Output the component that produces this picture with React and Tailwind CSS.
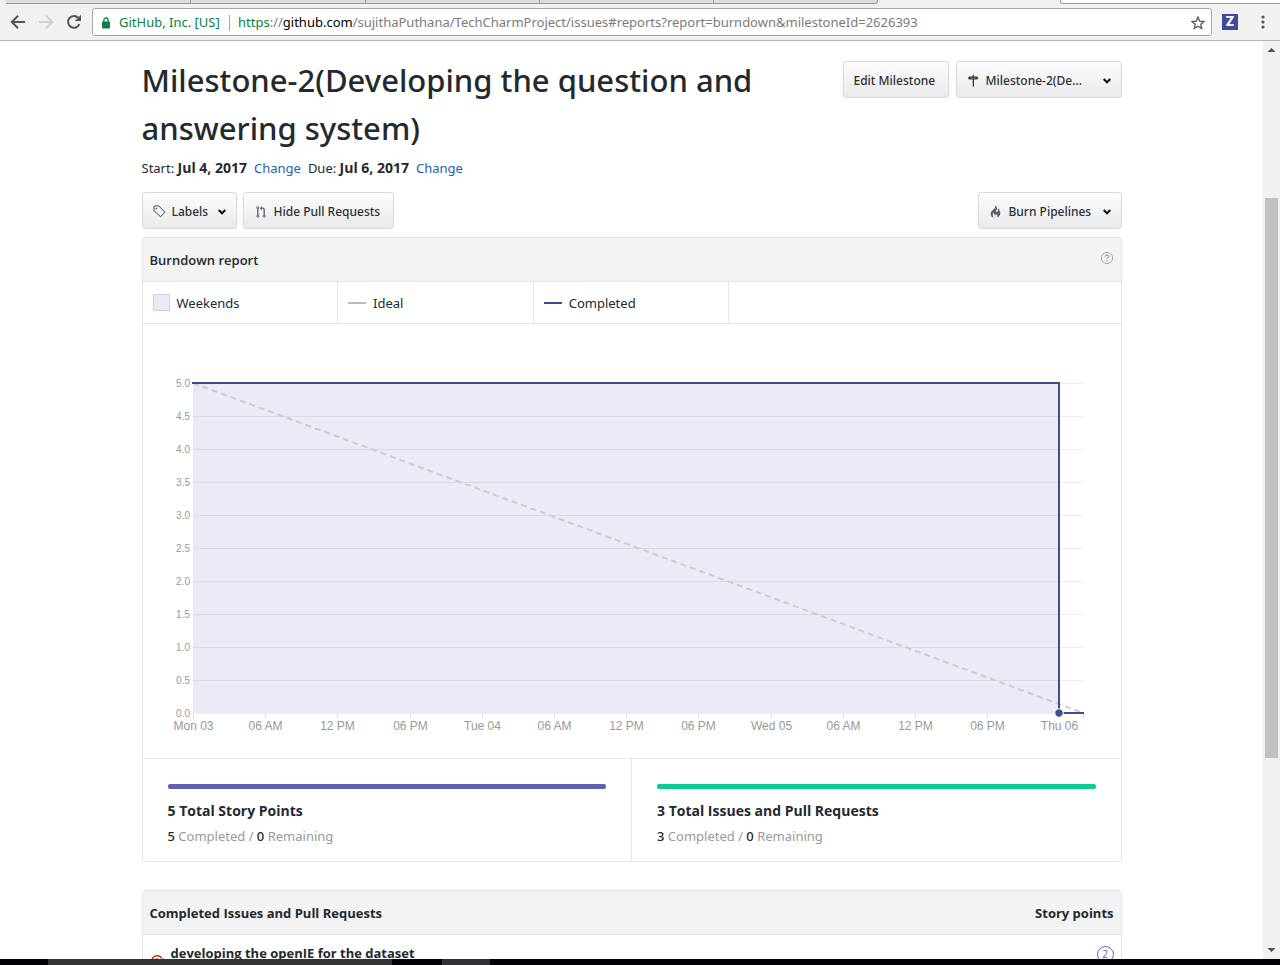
const ticksX = ["Mon 03", "06 AM", "12 PM", "06 PM", "Tue 04", "06 AM", "12 PM", "06 PM", "Wed 05", "06 AM", "12 PM", "06 PM", "Thu 06"];
const ticksY = ["5.0", "4.5", "4.0", "3.5", "3.0", "2.5", "2.0", "1.5", "1.0", "0.5", "0.0"];
const tickX = (i) => 50.5 + Math.round(i * 72.2);

function Chevron() {
  return (
    <svg width="8" height="6" viewBox="0 0 8 6" fill="none" stroke="#111" strokeWidth="2" aria-hidden="true">
      <path d="M0.7 1 L4 4.3 L7.3 1" />
    </svg>
  );
}

function TagIcon() {
  return (
    <svg width="13" height="13" viewBox="0 0 13 13" fill="none" stroke="#3f474f" aria-hidden="true">
      <path d="M1 1.9 Q1 1 1.9 1 H5.8 L12 7.2 L7.6 11.8 L1 5.6 Z" strokeLinejoin="round" />
      <circle cx="3.4" cy="3.5" r="0.8" fill="#3f474f" stroke="none" />
    </svg>
  );
}

function PullRequestIcon() {
  return (
    <svg width="10" height="12" viewBox="0 0 10 12" fill="none" stroke="#59636e" aria-hidden="true">
      <path d="M1.8 2.6 V9.4" strokeWidth="1.3" />
      <path d="M5 2.2 H7 Q8.2 2.2 8.2 3.6 V9.4" strokeWidth="1.3" />
      <path d="M6 0.2 V4.2 L3.8 2.2 Z" fill="#59636e" stroke="none" />
      <circle cx="1.8" cy="1.8" r="1.1" />
      <circle cx="1.8" cy="10.2" r="1.1" />
      <circle cx="8.2" cy="10.2" r="1.1" />
    </svg>
  );
}

function SignpostIcon() {
  return (
    <svg width="11" height="12" viewBox="0 0 11 12" fill="#2f363d" aria-hidden="true">
      <path d="M4.7 0 H6 V1.6 H9 L10.6 3 L9 4.4 H6 V11.5 H4.7 V4.4 H1 L0 3 L1 1.6 H4.7 Z" />
      <path d="M2 2.8 H8.4 V3.3 H2 Z" fill="#aaa" />
    </svg>
  );
}

function FlameIcon() {
  return (
    <svg width="11" height="13" viewBox="0 0 12 16" fill="#59636e" aria-hidden="true">
      <path d="M5.05 0.31c0.81 2.17 0.41 3.38-0.52 4.31C3.55 5.67 1.98 6.45 0.9 7.98c-1.45 2.05-1.7 6.53 3.53 7.7-2.2-1.16-2.67-4.52-0.3-6.61-0.61 2.03 0.53 3.33 1.94 2.86 1.39-0.47 2.3 0.53 2.27 1.67-0.02 0.78-0.31 1.44-1.13 1.81 3.42-0.59 4.78-3.42 4.78-5.56 0-2.84-2.53-3.22-1.25-5.61-1.52 0.13-2.03 1.13-1.89 2.75 0.09 1.08-1.02 1.8-1.86 1.33-0.67-0.41-0.66-1.19-0.06-1.78C8.18 5.31 8.68 2.45 5.05 0.32z" />
    </svg>
  );
}

function ToolButton({ children, menu, className = "" }) {
  return (
    <button
      type="button"
      aria-haspopup={menu ? "menu" : undefined}
      className={"flex h-[37px] items-center rounded-[3px] border border-[#d9d9d9] bg-linear-to-b from-[#fcfcfc] to-[#eaeaea] px-[10px] pt-[2px] text-[12px] font-medium whitespace-nowrap text-[#2b3137] " + className}
    >
      {children}
    </button>
  );
}

function BrowserBar() {
  return (
    <header className="shrink-0">
      <div className="flex h-1 bg-[#f1f1f1] pl-[6px]" aria-hidden="true">
        <div className="flex w-[872px] rounded-br-[3px] border-r border-b border-[#9b9b9b] bg-[#dcdcdc]">
          <div className="w-[185px] border-r border-[#a0a0a0]" />
          <div className="w-[175px] border-r border-[#a0a0a0]" />
          <div className="w-[174px] border-r border-[#a0a0a0]" />
          <div className="w-[174px] border-r border-[#a0a0a0]" />
        </div>
        <div className="w-[182px]" />
        <div className="flex-1 rounded-bl-[3px] border-b border-l border-[#9b9b9b] bg-white" />
      </div>
      <div className="flex h-[37px] items-center border-b border-[#b5b5b5] bg-[#f1f1f1] pr-[9px] pl-[10px]">
        <button type="button" aria-label="Back" className="w-[28px]">
          <svg width="16" height="16" viewBox="0 0 16 16" fill="none" stroke="#555" strokeWidth="2">
            <path d="M15 8 H2.4 M8 1.7 L1.8 8 L8 14.3" />
          </svg>
        </button>
        <button type="button" aria-label="Forward" className="w-[28px]">
          <svg width="16" height="16" viewBox="0 0 16 16" fill="none" stroke="#d0d0d0" strokeWidth="2">
            <path d="M1 8 H13.6 M8 1.7 L14.2 8 L8 14.3" />
          </svg>
        </button>
        <button type="button" aria-label="Reload" className="w-[26px]">
          <svg width="16" height="16" viewBox="0 0 16 16" fill="none" stroke="#555" strokeWidth="2">
            <path d="M13.4 10.2 A5.9 5.9 0 1 1 12.3 3.8" />
            <path d="M15 0.8 V7 H8.8 Z" fill="#555" stroke="none" />
          </svg>
        </button>
        <div className="flex h-[28px] flex-1 items-center rounded-[3px] border border-[#a6a6a6] bg-white pt-px pr-[6px] pl-[9px] text-[13px]">
          <svg width="8" height="12" viewBox="0 0 8 12" aria-hidden="true">
            <rect x="0" y="4.5" width="8" height="7" rx="0.8" fill="#0b8043" />
            <path d="M1.9 5 V3.1 a2.1 2.1 0 0 1 4.2 0 V5" fill="none" stroke="#0b8043" strokeWidth="1.3" />
          </svg>
          <span className="ml-[9px] w-[102px] whitespace-nowrap text-[#0b8043]">GitHub, Inc. [US]</span>
          <span className="mr-[8px] ml-[8px] h-[16px] w-px bg-[#a8a8a8]" />
          <div
            role="textbox"
            aria-label="Address"
            contentEditable
            suppressContentEditableWarning
            className="flex-1 whitespace-nowrap text-[#7b7b7b]"
          >
            <span className="text-[#0b8043]">https</span>://<span className="text-black">github.com</span>/sujithaPuthana/TechCharmProject/issues#reports?report=burndown&amp;milestoneId=2626393
          </div>
          <button type="button" aria-label="Bookmark">
            <svg width="14" height="14" viewBox="0 0 14 14" fill="none" stroke="#555" strokeWidth="1.3">
              <path d="M7 1.2 L8.7 5.1 L13 5.5 L9.8 8.3 L10.7 12.5 L7 10.3 L3.3 12.5 L4.2 8.3 L1 5.5 L5.3 5.1 Z" />
            </svg>
          </button>
        </div>
        <button type="button" className="ml-[10px] flex size-4 items-center justify-center bg-[#3e4b9c] font-[Inter,sans-serif] text-[13px] font-extrabold text-white">Z</button>
        <button type="button" aria-label="Menu" className="ml-[17px] flex w-[16px] justify-center">
          <svg width="4" height="14" viewBox="0 0 4 14" fill="#555">
            <circle cx="2" cy="2" r="1.6" />
            <circle cx="2" cy="7" r="1.6" />
            <circle cx="2" cy="12" r="1.6" />
          </svg>
        </button>
      </div>
    </header>
  );
}

function BurndownChart() {
  return (
    <svg viewBox="0 0 978 434" className="block w-full font-['Liberation_Sans',sans-serif]" role="img" aria-label="Burndown chart">
      <rect x="50" y="59" width="866" height="330" fill="#ebebf7" />
      {ticksY.map((t, i) => (
        <g key={t}>
          <path d={`M50 ${59.5 + i * 33} H940`} stroke="#000" strokeOpacity="0.07" />
          <text x="47" y={63 + i * 33} textAnchor="end" fontSize="10" fill="#999">{t}</text>
        </g>
      ))}
      {ticksX.map((t, i) => (
        <g key={i}>
          <path d={`M${tickX(i)} 390 V395`} stroke="#dedede" />
          <text x={tickX(i)} y="406" textAnchor="middle" fontSize="12" fill="#999">{t}</text>
        </g>
      ))}
      <path d="M940.5 390 V395" stroke="#dedede" />
      <path d="M50 59 L940 389" fill="none" stroke="#cccccf" strokeWidth="2" strokeDasharray="6 4" />
      <path d="M49 59 H916 V389" fill="none" stroke="#3f4d93" strokeWidth="2" />
      <path d="M916 389 H941" stroke="#3f4d93" strokeWidth="2" />
      <circle cx="916" cy="389" r="4.2" fill="#3f4d93" stroke="#fff" strokeWidth="1" />
    </svg>
  );
}

function Stat({ value, title, bar, className = "" }) {
  return (
    <div className={"flex-1 px-[25px] pt-[25px] pb-[14px] " + className}>
      <div className={"h-[5px] rounded-[2px] " + bar} />
      <h3 className="mt-[10px] font-['Open_Sans',sans-serif] text-[14px] leading-[24px] font-bold">{value} {title}</h3>
      <p className="mt-[2px] text-[13px] leading-[22px] text-[#999]">
        <span className="font-medium text-[#24292e]">{value}</span> Completed / <span className="font-medium text-[#24292e]">0</span> Remaining
      </p>
    </div>
  );
}

function Scrollbar() {
  return (
    <div className="flex w-[17px] shrink-0 flex-col items-center bg-[#f1f1f1]" aria-hidden="true">
      <svg width="9" height="17" viewBox="0 0 9 17" fill="#505050"><path d="M0.5 11 L4.5 7 L8.5 11 Z" /></svg>
      <div className="grow-[140]" />
      <div className="w-[13px] grow-[560] bg-[#c1c1c1]" />
      <div className="grow-[184]" />
      <svg width="9" height="17" viewBox="0 0 9 17" fill="#505050"><path d="M0.5 6 L4.5 10 L8.5 6 Z" /></svg>
    </div>
  );
}

export default function App() {
  return (
    <div className="flex h-screen flex-col overflow-hidden bg-white font-['Noto_Sans',sans-serif] text-[#24292e]">
      <BrowserBar />
      <div className="flex min-h-0 flex-1">
        <main className="min-w-0 flex-1 overflow-hidden">
          <div className="mx-auto max-w-[980px] pt-[15px]">
            <div className="flex items-start justify-between">
              <h1 className="max-w-[640px] text-[31px] leading-[48px] font-medium">Milestone-2(Developing the question and answering system)</h1>
              <div className="mt-[5px] flex gap-[7px]">
                <ToolButton className="w-[106px]">Edit Milestone</ToolButton>
                <ToolButton menu className="w-[166px]">
                  <span className="flex w-[19px] pl-px"><SignpostIcon /></span>
                  <span className="flex-1 text-left">Milestone-2(De...</span>
                  <Chevron />
                </ToolButton>
              </div>
            </div>
            <p className="mt-[6px] text-[13px] leading-[20px] whitespace-nowrap">
              Start: <b className="font-['Open_Sans',sans-serif] text-[14px] font-bold">Jul 4, 2017</b>
              <a href="#start" className="mx-[7px] text-[#2a5db8]">Change</a>
              Due: <b className="font-['Open_Sans',sans-serif] text-[14px] font-bold">Jul 6, 2017</b>
              <a href="#due" className="mx-[7px] text-[#2a5db8]">Change</a>
            </p>
            <div className="mt-[14px] flex gap-[6px]">
              <ToolButton menu className="w-[95px]">
                <TagIcon />
                <span className="ml-[6px] flex-1 text-left">Labels</span>
                <Chevron />
              </ToolButton>
              <ToolButton className="w-[151px]">
                <span className="flex w-[20px] pl-[2px]"><PullRequestIcon /></span>
                <span>Hide Pull Requests</span>
              </ToolButton>
              <ToolButton menu className="ml-auto w-[144px]">
                <span className="flex w-[20px] pl-px"><FlameIcon /></span>
                <span className="flex-1 text-left">Burn Pipelines</span>
                <Chevron />
              </ToolButton>
            </div>

            <section className="mt-[8px] rounded-[3px] border border-[#e5e5e5]">
              <div className="flex h-[44px] items-center justify-between border-b border-[#e5e5e5] bg-[#f3f3f3] px-[7px] pt-[2px]">
                <h2 className="font-['Open_Sans',sans-serif] text-[13px] font-semibold">Burndown report</h2>
                <button type="button" aria-label="Help" className="mb-[6px]">
                  <svg width="14" height="14" viewBox="0 0 14 14" fill="none" stroke="#aaa">
                    <circle cx="7" cy="7" r="5.6" />
                    <path d="M5.2 5.7 Q5.3 4.1 7 4.1 Q8.8 4.2 8.8 5.5 Q8.8 6.3 7.7 6.8 Q7 7.2 7 8.1 M7 9 V10.3" strokeWidth="1.2" />
                  </svg>
                </button>
              </div>
              <ul className="flex h-[42px] border-b border-[#e5e5e5] text-[13px]">
                <li className="flex w-1/5 items-center border-r border-[#e5e5e5] pl-[10px]">
                  <span className="mr-[7px] size-[17px] border border-[#d0d0dc] bg-[#ebebf7]" />
                  <span className="pt-[2px]">Weekends</span>
                </li>
                <li className="flex w-1/5 items-center border-r border-[#e5e5e5] pl-[10px]">
                  <span className="mr-[7px] h-[2px] w-[18px] bg-[#bbb]" />
                  <span className="pt-[2px]">Ideal</span>
                </li>
                <li className="flex w-1/5 items-center border-r border-[#e5e5e5] pl-[10px]">
                  <span className="mr-[7px] h-[2px] w-[18px] bg-[#3f4d93]" />
                  <span className="pt-[2px]">Completed</span>
                </li>
              </ul>
              <BurndownChart />
              <div className="flex border-t border-[#e5e5e5]">
                <Stat value="5" title="Total Story Points" bar="bg-[#6060b5]" className="border-r border-[#e5e5e5]" />
                <Stat value="3" title="Total Issues and Pull Requests" bar="bg-[#0ccb8e]" />
              </div>
            </section>

            <section className="mt-[28px] rounded-[3px] border border-[#e5e5e5]">
              <table className="w-full font-['Open_Sans',sans-serif] text-[13px]">
                <thead>
                  <tr className="h-[43px] border-b border-[#e5e5e5] bg-[#f3f3f3]">
                    <th className="px-[7px] pt-[2px] text-left font-bold">Completed Issues and Pull Requests</th>
                    <th className="px-[7px] pt-[2px] text-right font-bold">Story points</th>
                  </tr>
                </thead>
                <tbody>
                  <tr className="h-[60px] align-top">
                    <td className="pt-[8px] pl-[7px]">
                      <div className="flex">
                        <svg width="14" height="16" viewBox="0 0 14 16" className="mt-[11px] mr-[7px]" fill="none" stroke="#bd2c00" strokeWidth="1.4" aria-hidden="true">
                          <path d="M12 4.5 A5.6 5.6 0 1 0 12.4 9.4" />
                          <path d="M7 4 V8 M7 9.5 V11" />
                          <path d="M9.2 6.6 L11 8.4 L14 4.8" />
                        </svg>
                        <a href="#issue" className="leading-[20px] font-bold">developing the openIE for the dataset</a>
                      </div>
                    </td>
                    <td className="pt-[11px] pr-[7px]">
                      <span className="ml-auto flex size-[17px] items-center justify-center rounded-full border border-[#6060b5] text-[10px] text-[#6060b5]">2</span>
                    </td>
                  </tr>
                </tbody>
              </table>
            </section>
          </div>
        </main>
        <Scrollbar />
      </div>
      <footer className="flex h-[6px] shrink-0 bg-[#020207] pl-[48px]" aria-hidden="true">
        <div className="w-[344px] bg-[#333]" />
        <div className="ml-[50px] w-[48px] bg-[#303136]" />
      </footer>
    </div>
  );
}
